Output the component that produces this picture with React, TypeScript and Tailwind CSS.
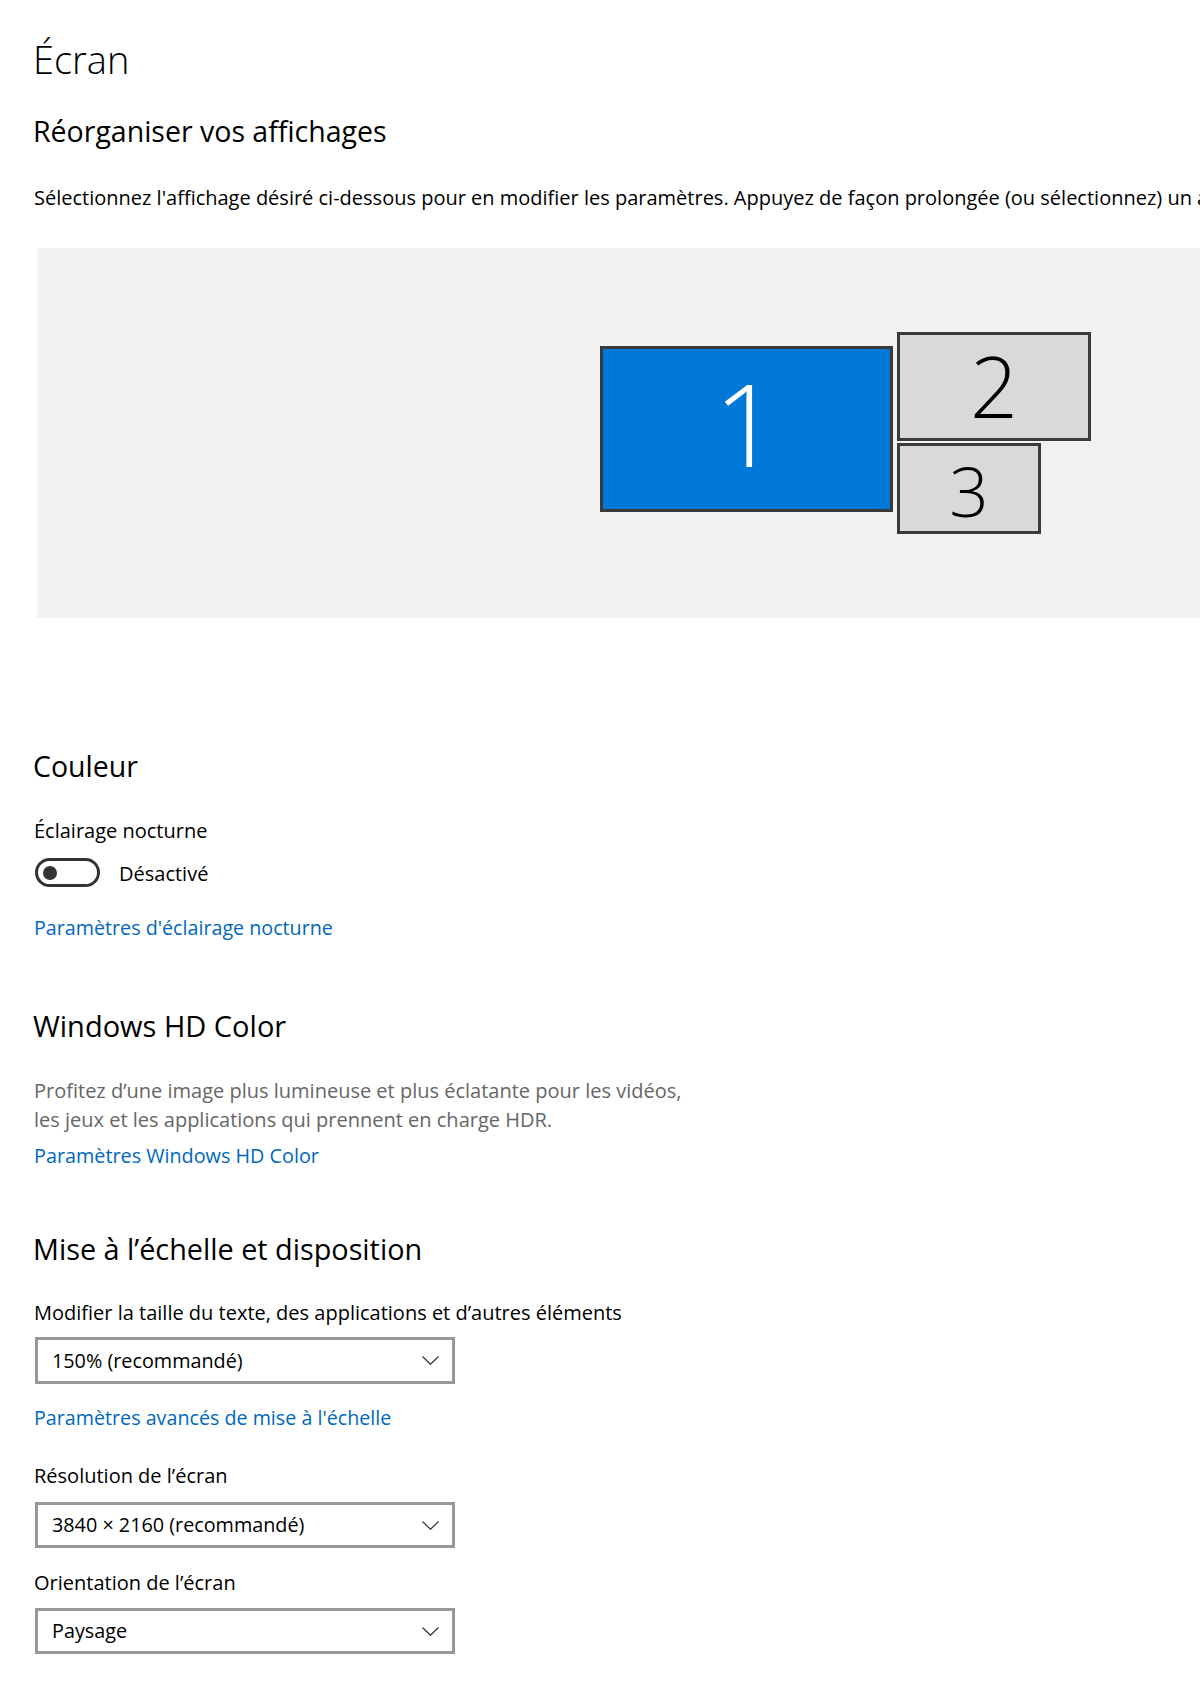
import React from "react";

function Chevron() {
  return (
    <svg width="17" height="9" viewBox="0 0 17 9" fill="none">
      <path d="M0.5 0.5 L8.5 8.3 L16.5 0.5" stroke="#333" strokeWidth="1.2" />
    </svg>
  );
}

function Dropdown({ value, className }: { value: string; className: string }) {
  return (
    <div
      className={`w-[420px] border-[3px] border-[#999999] bg-white flex items-center justify-between pl-[14px] pr-[13px] ${className}`}
    >
      <span className="text-[19.8px] leading-[28px] text-black">{value}</span>
      <Chevron />
    </div>
  );
}

export default function App() {
  return (
    <div className="w-[1200px] h-[1695px] overflow-hidden bg-white font-['Open_Sans',sans-serif] text-black">
      <div className="pl-[33px] pt-[35px] flex flex-col">
        <h1 className="text-[38px] leading-[48px] font-light h-[48px]">Écran</h1>
        <h2 className="mt-[30px] text-[28.5px] leading-[36px] h-[36px]">Réorganiser vos affichages</h2>
        <p className="mt-[35px] text-[20px] leading-[28px] h-[28px] whitespace-nowrap pl-[1px]">
          Sélectionnez l'affichage désiré ci-dessous pour en modifier les paramètres. Appuyez de façon prolongée (ou sélectionnez) un affichage, puis faites-le glisser pour le réorganiser.
        </p>
        <div className="mt-[36px] ml-[4px] h-[370px] bg-[#f2f2f2] relative">
          <div className="absolute left-[563px] top-[98px] w-[293px] h-[166px] bg-[#0078d7] border-[3px] border-[#3a3a3a] flex items-center justify-center">
            <span className="text-[115px] leading-none font-light text-white -translate-y-[7px]">1</span>
          </div>
          <div className="absolute left-[860px] top-[84px] w-[194px] h-[109px] bg-[#d9d9d9] border-[3px] border-[#3a3a3a] flex items-center justify-center">
            <span className="text-[84px] leading-none font-light text-black -translate-y-[1px]">2</span>
          </div>
          <div className="absolute left-[860px] top-[195px] w-[144px] h-[91px] bg-[#d9d9d9] border-[3px] border-[#3a3a3a] flex items-center justify-center">
            <span className="text-[69px] leading-none font-light text-black translate-y-[2px]">3</span>
          </div>
        </div>

        <h2 className="mt-[130px] text-[28.5px] leading-[36px] h-[36px]">Couleur</h2>
        <div className="mt-[33px] text-[20px] leading-[28px] h-[28px] pl-[1px]">Éclairage nocturne</div>
        <div className="mt-[13px] ml-[2px] flex items-center h-[29px]">
          <div className="w-[65px] h-[29px] rounded-full border-[3px] border-[#333333] flex items-center pl-[5px]">
            <div className="w-[14px] h-[14px] rounded-full bg-[#333333]" />
          </div>
          <span className="ml-[19px] text-[20px] leading-[28px] translate-y-[1px]">Désactivé</span>
        </div>
        <a className="mt-[27px] text-[19.7px] leading-[28px] h-[28px] text-[#0067c0] pl-[1px]">Paramètres d'éclairage nocturne</a>

        <h2 className="mt-[66px] text-[29px] leading-[36px] h-[36px]">Windows HD Color</h2>
        <p className="mt-[32px] text-[20px] leading-[29px] text-[#666666] pl-[1px]">
          Profitez d’une image plus lumineuse et plus éclatante pour les vidéos,
          <br />
          les jeux et les applications qui prennent en charge HDR.
        </p>
        <a className="mt-[8px] text-[19.8px] leading-[28px] h-[28px] text-[#0067c0] pl-[1px]">Paramètres Windows HD Color</a>

        <h2 className="mt-[61px] text-[28.8px] leading-[36px] h-[36px]">Mise à l’échelle et disposition</h2>
        <div className="mt-[32px] text-[20px] leading-[28px] h-[28px] pl-[1px]">
          Modifier la taille du texte, des applications et d’autres éléments
        </div>
        <Dropdown value="150% (recommandé)" className="mt-[10px] ml-[2px] h-[47px]" />
        <a className="mt-[20px] text-[19.7px] leading-[28px] h-[28px] text-[#0067c0] pl-[1px]">Paramètres avancés de mise à l'échelle</a>
        <div className="mt-[30px] text-[20px] leading-[28px] h-[28px] pl-[1px]">Résolution de l’écran</div>
        <Dropdown value="3840 × 2160 (recommandé)" className="mt-[12px] ml-[2px] h-[46px]" />
        <div className="mt-[21px] text-[20px] leading-[28px] h-[28px] pl-[1px]">Orientation de l’écran</div>
        <Dropdown value="Paysage" className="mt-[11px] ml-[2px] h-[46px]" />
      </div>
    </div>
  );
}
